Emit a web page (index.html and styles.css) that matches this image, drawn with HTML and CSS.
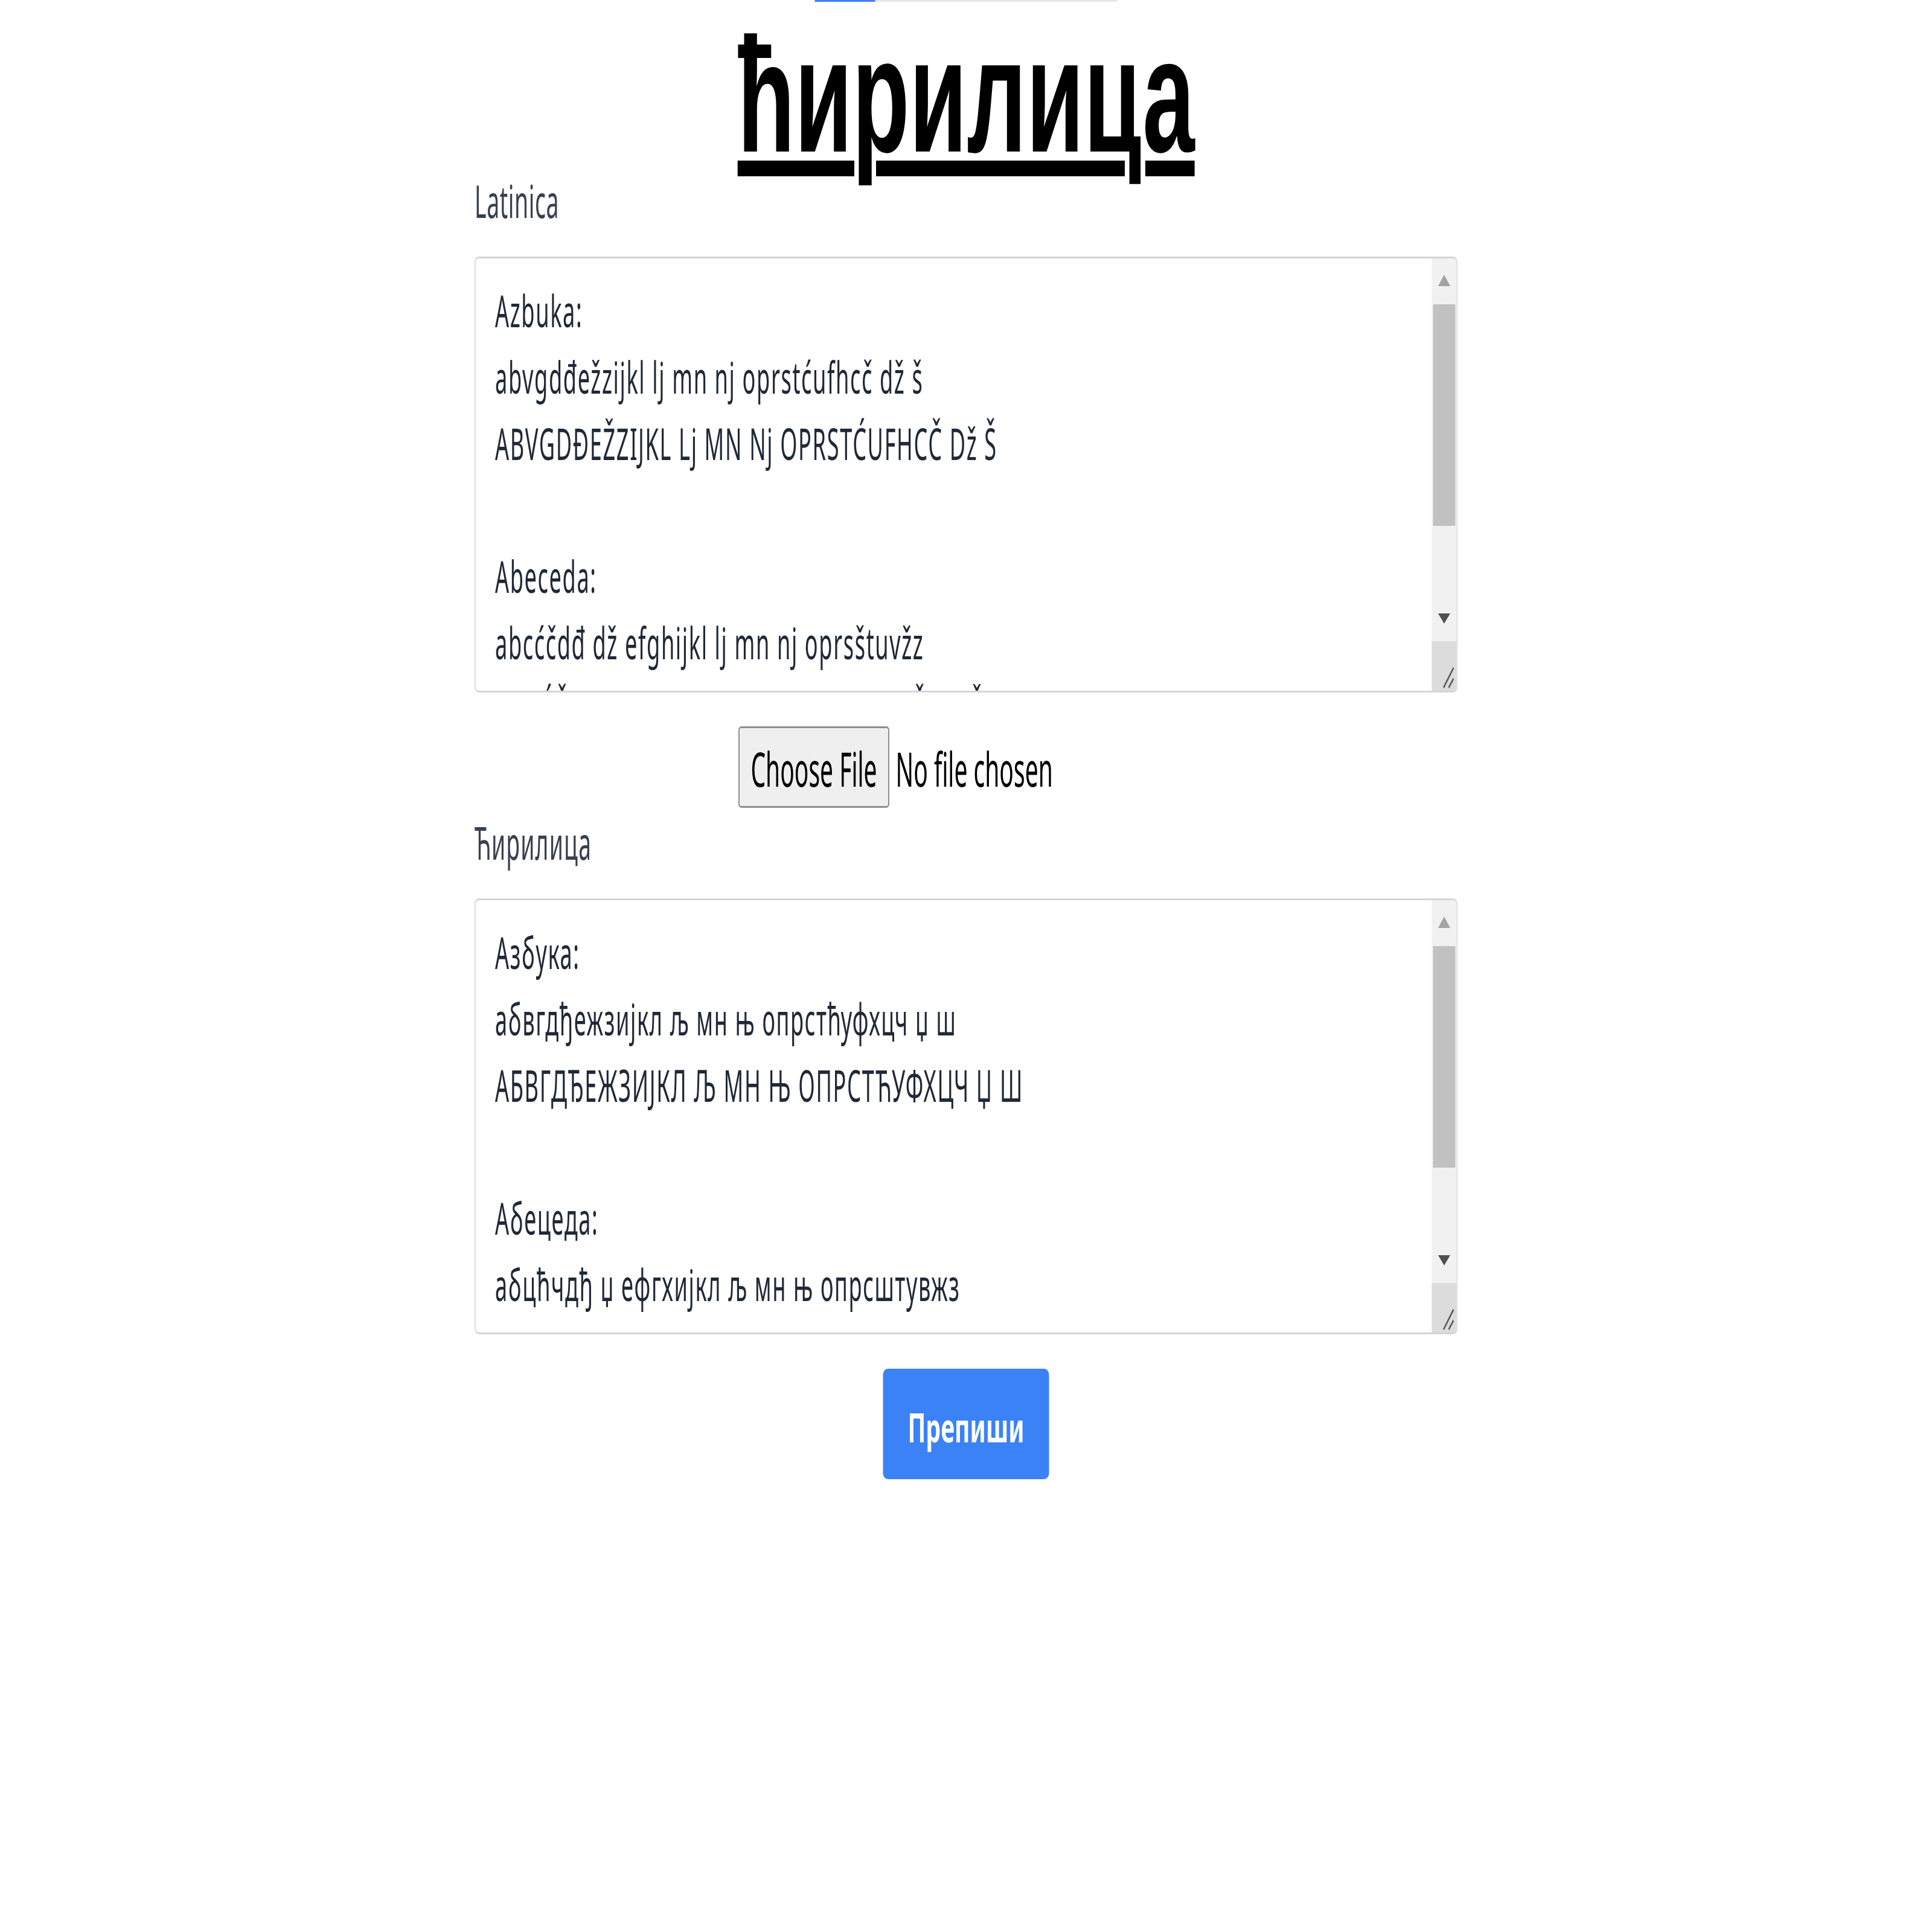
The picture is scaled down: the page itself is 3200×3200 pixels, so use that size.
FILE: index.html
```html
<!DOCTYPE html>
<html lang="sr">
<head>
<meta charset="utf-8">
<title>Ћирилица</title>
<link rel="stylesheet" href="styles.css">
</head>
<body>
<div class="viewport">
  <div class="page">
    <div class="progress"><div class="progress-fill"></div></div>
    <h1 class="title"><span class="title-text">ћирилица</span></h1>
    <div class="form">
      <div class="label">Latinica</div>
      <div class="ta">
        <div class="ta-text">Azbuka:
abvgdđežzijkl lj mn nj oprstćufhcč dž š
ABVGDĐEŽZIJKL Lj MN Nj OPRSTĆUFHCČ Dž Š

Abeceda:
abcćčdđ dž efghijkl lj mn nj oprsštuvžz
ABCĆČDĐ Dž EFGHIJKL Lj MN Nj OPRSŠTUVŽZ</div>
        <div class="sb">
          <div class="sb-btn"><svg viewBox="0 0 10 10" preserveAspectRatio="none"><polygon points="0,10 5,0 10,10" fill="#a3a3a3"/></svg></div>
          <div class="sb-track"><div class="sb-thumb"></div></div>
          <div class="sb-btn sb-down"><svg viewBox="0 0 10 10" preserveAspectRatio="none"><polygon points="0,0 10,0 5,10" fill="#505050"/></svg></div>
          <div class="sb-corner"><svg viewBox="0 0 82 82" preserveAspectRatio="none"><line x1="72" y1="44" x2="39" y2="77" stroke="#5a5a5a" stroke-width="4"/><line x1="72" y1="62" x2="56" y2="77" stroke="#5a5a5a" stroke-width="4"/></svg></div>
        </div>
      </div>
      <label class="file"><span class="file-btn">Choose File</span><span class="file-name">No file chosen</span></label>
      <div class="label label-2">Ћирилица</div>
      <div class="ta">
        <div class="ta-text">Азбука:
абвгдђежзијкл љ мн њ опрстћуфхцч џ ш
АБВГДЂЕЖЗИЈКЛ Љ МН Њ ОПРСТЋУФХЦЧ Џ Ш

Абецеда:
абцћчдђ џ ефгхијкл љ мн њ опрсштувжз
АБЦЋЧДЂ Џ ЕФГХИЈКЛ Љ МН Њ ОПРСШТУВЖЗ</div>
        <div class="sb">
          <div class="sb-btn"><svg viewBox="0 0 10 10" preserveAspectRatio="none"><polygon points="0,10 5,0 10,10" fill="#a3a3a3"/></svg></div>
          <div class="sb-track"><div class="sb-thumb"></div></div>
          <div class="sb-btn sb-down"><svg viewBox="0 0 10 10" preserveAspectRatio="none"><polygon points="0,0 10,0 5,10" fill="#505050"/></svg></div>
          <div class="sb-corner"><svg viewBox="0 0 82 82" preserveAspectRatio="none"><line x1="72" y1="44" x2="39" y2="77" stroke="#5a5a5a" stroke-width="4"/><line x1="72" y1="62" x2="56" y2="77" stroke="#5a5a5a" stroke-width="4"/></svg></div>
        </div>
      </div>
      <button class="submit" type="button"><span class="submit-text">Препиши</span></button>
    </div>
  </div>
</div>
</body>
</html>
```

FILE: styles.css
```css
html, body {
  margin: 0;
  padding: 0;
  background: #fff;
  overflow: hidden;
}

.viewport {
  width: 3200px;
  height: 3200px;
  overflow: hidden;
}

.page {
  width: 6400px;
  transform: scaleX(0.5);
  transform-origin: 0 0;
  display: flex;
  flex-direction: column;
  align-items: center;
  font-family: "Noto Sans", "Open Sans", sans-serif;
}

.progress {
  width: 1002px;
  height: 3px;
  background: #e5e7eb;
  display: flex;
}

.progress-fill {
  width: 200px;
  background: #3b82f6;
}

.title {
  margin: 20.4px 0 0;
  font: 700 270px/270px "Liberation Sans", Arial, sans-serif;
  color: #000;
  text-align: center;
}

.title-text {
  display: inline-block;
  text-decoration: underline;
  text-decoration-thickness: 26px;
  text-underline-offset: 15px;
  transform: scaleX(1.148);
}

.form {
  width: 3256px;
  display: flex;
  flex-direction: column;
}

.label {
  margin-top: 2.1px;
  font-size: 74.7px;
  line-height: 75px;
  letter-spacing: 1.2px;
  color: #374151;
}

.label-2 {
  margin-top: 20.5px;
  letter-spacing: 2.4px;
}

.ta {
  margin-top: 54.5px;
  height: 722px;
  box-sizing: border-box;
  border: 3px solid #d1d5db;
  border-radius: 14px / 10px;
  display: flex;
  overflow: hidden;
  background: #fff;
}

.ta-text {
  flex: 1;
  padding: 31.5px 0 0 65px;
  font-size: 72.4px;
  line-height: 110px;
  letter-spacing: 3.2px;
  color: #1f2937;
  white-space: pre;
  overflow: hidden;
}

.sb {
  width: 82px;
  display: flex;
  flex-direction: column;
  background: #f1f1f1;
}

.sb-btn {
  height: 74px;
  display: flex;
  align-items: center;
  justify-content: center;
}

.sb-btn svg {
  width: 40px;
  height: 19px;
  display: block;
}

.sb-down svg {
  height: 17px;
}

.sb-track {
  flex: 1;
  padding: 2px 4px 0;
}

.sb-thumb {
  height: 367px;
  background: #c1c1c1;
}

.sb-corner {
  height: 82px;
  background: #dcdcdc;
}

.sb-corner svg {
  width: 82px;
  height: 82px;
  display: block;
}

.file {
  margin-top: 56px;
  align-self: center;
  width: 1508px;
  height: 135px;
  display: flex;
  align-items: center;
  color: #000;
  font-size: 78px;
  line-height: 78px;
}

.file-btn {
  width: 500px;
  height: 135px;
  box-sizing: border-box;
  border-style: solid;
  border-color: #8f8f8f;
  border-width: 3px 4px;
  border-radius: 10px / 6px;
  background: #efefef;
  padding-top: 6px;
  display: flex;
  align-items: center;
  justify-content: center;
}

.file-name {
  margin-left: 21px;
  padding-top: 6px;
}

.submit {
  align-self: center;
  margin-top: 57px;
  width: 550px;
  height: 183px;
  padding: 11px 0 0;
  border: none;
  border-radius: 16px / 10px;
  background: #3b82f6;
  color: #fff;
  font: 700 67px/67px "Noto Sans", "Open Sans", sans-serif;
  display: flex;
  align-items: center;
  justify-content: center;
}

.submit-text {
  display: inline-block;
  transform: scaleX(1.17);
}
```
